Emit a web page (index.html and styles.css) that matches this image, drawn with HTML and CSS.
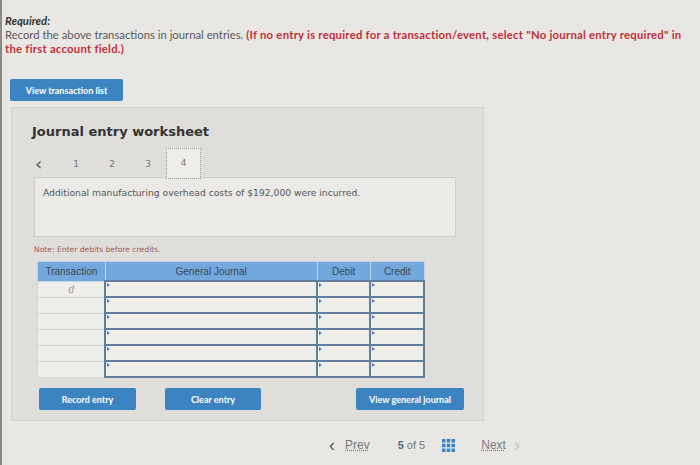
FILE: index.html
```html
<!DOCTYPE html>
<html lang="en">
<head>
    <meta charset="UTF-8">
    <meta name="viewport" content="width=device-width, initial-scale=1.0">
    <title>Journal entry worksheet</title>
    <link rel="stylesheet" href="styles.css">
</head>
<body>
    <!-- Enunciado -->
    <div class="instructions">
        <p class="required">Required:</p>
        <p>Record the above transactions in journal entries. <span class="hint">(If no entry is required for a transaction/event, select "No journal entry required" in the first account field.)</span></p>
    </div>

    <button class="btn btn-list">View transaction list</button>

    <!-- Hoja de trabajo -->
    <div class="worksheet">
        <h2>Journal entry worksheet</h2>

        <div class="tabs">
            <span class="tab-prev">&#8249;</span>
            <span class="tab">1</span>
            <span class="tab">2</span>
            <span class="tab">3</span>
            <span class="tab active">4</span>
        </div>

        <div class="desc-box">
            Additional manufacturing overhead costs of $192,000 were incurred.
        </div>

        <p class="note">Note: Enter debits before credits.</p>

        <table class="journal">
            <thead>
                <tr>
                    <th class="col-trans">Transaction</th>
                    <th class="col-gj">General Journal</th>
                    <th class="col-num">Debit</th>
                    <th class="col-num">Credit</th>
                </tr>
            </thead>
            <tbody>
                <tr><td class="trans">d</td><td class="field"></td><td class="field"></td><td class="field"></td></tr>
                <tr><td class="trans"></td><td class="field"></td><td class="field"></td><td class="field"></td></tr>
                <tr><td class="trans"></td><td class="field"></td><td class="field"></td><td class="field"></td></tr>
                <tr><td class="trans"></td><td class="field"></td><td class="field"></td><td class="field"></td></tr>
                <tr><td class="trans"></td><td class="field"></td><td class="field"></td><td class="field"></td></tr>
                <tr><td class="trans"></td><td class="field"></td><td class="field"></td><td class="field"></td></tr>
            </tbody>
        </table>

        <div class="actions">
            <button class="btn btn-record">Record entry</button>
            <button class="btn btn-clear">Clear entry</button>
            <button class="btn btn-view">View general journal</button>
        </div>
    </div>

    <!-- Paginación -->
    <div class="pager">
        <span class="pager-arrow">&#8249;</span>
        <span class="pager-link">Prev</span>
        <span class="pager-count"><b>5</b> of 5</span>
        <svg class="pager-grid" width="13" height="13" viewBox="0 0 13 13">
            <rect x="0" y="0" width="3.5" height="3.5"/><rect x="4.75" y="0" width="3.5" height="3.5"/><rect x="9.5" y="0" width="3.5" height="3.5"/>
            <rect x="0" y="4.75" width="3.5" height="3.5"/><rect x="4.75" y="4.75" width="3.5" height="3.5"/><rect x="9.5" y="4.75" width="3.5" height="3.5"/>
            <rect x="0" y="9.5" width="3.5" height="3.5"/><rect x="4.75" y="9.5" width="3.5" height="3.5"/><rect x="9.5" y="9.5" width="3.5" height="3.5"/>
        </svg>
        <span class="pager-link next">Next</span>
        <span class="pager-arrow light">&#8250;</span>
    </div>
</body>
</html>
```

FILE: styles.css
```css
/* Estilos generales */
body {
    margin: 0;
    height: 465px;
    box-sizing: border-box;
    background-color: #e8e7e3;
    border-left: 2px solid #8a8985;
    font-family: "Lato", "Liberation Sans", sans-serif;
    color: #5a5a5a;
    overflow: hidden;
}

/* Enunciado */
.instructions {
    padding: 14px 12px 0 3px;
    font-size: 11.3px;
    line-height: 14px;
}

.instructions p {
    margin: 0;
}

.instructions .required {
    font-style: italic;
    font-weight: bold;
    color: #333;
}

.instructions .hint {
    color: #c0303a;
    font-weight: bold;
    letter-spacing: 0.25px;
}

/* Botones */
.btn {
    display: block;
    background-color: #3b84c1;
    color: #fff;
    border: none;
    border-radius: 2px;
    font-family: "Lato", "Liberation Sans", sans-serif;
    font-size: 9px;
    font-weight: bold;
    height: 22px;
    padding: 0;
    cursor: pointer;
}

.btn-list {
    margin: 23px 0 0 8px;
    width: 113px;
}

/* Hoja de trabajo */
.worksheet {
    margin: 6px 0 0 9px;
    width: 473px;
    height: 314px;
    box-sizing: border-box;
    background-color: #dfdedb;
    border: 1px solid #d3d2ce;
    padding: 0 0 0 20px;
}

.worksheet h2 {
    margin: 16px 0 0;
    font-family: "DejaVu Sans", sans-serif;
    font-size: 13px;
    color: #333;
}

.tabs {
    display: flex;
    align-items: center;
    margin-top: 9px;
    height: 31px;
    font-family: "DejaVu Sans", sans-serif;
    font-size: 9px;
    color: #777;
}

.tab-prev {
    width: 23px;
    font-size: 18px;
    color: #555;
    padding-left: 3px;
}

.tab {
    width: 36px;
    text-align: center;
}

.tab.active {
    box-sizing: border-box;
    height: 31px;
    line-height: 29px;
    width: 35px;
    border: 1px dotted #9a9a9a;
    background-color: #eeede9;
}

.desc-box {
    margin: -2px 0 0 2px;
    width: 422px;
    height: 60px;
    box-sizing: border-box;
    background-color: #ebeae6;
    border: 1px solid #cfceca;
    padding: 9px 0 0 8px;
    font-family: "DejaVu Sans", sans-serif;
    font-size: 9.2px;
    color: #555;
}

.note {
    margin: 8px 0 0 2px;
    font-family: "DejaVu Sans", sans-serif;
    font-size: 7.6px;
    color: #a3585a;
}

/* Tabla del diario */
.journal {
    margin: 7px 0 0 5px;
    border-collapse: collapse;
    width: 388px;
    font-family: "Liberation Sans", sans-serif;
    font-size: 10px;
}

.journal th {
    height: 18px;
    background-color: #72a8db;
    color: #3c4754;
    font-weight: normal;
    border: 1px solid #c4d4e4;
    padding: 0;
}

.journal .col-trans {
    width: 67px;
}

.journal .col-gj {
    width: 214px;
}

.journal .col-num {
    width: 53px;
}

.journal td {
    height: 14px;
    padding: 0;
    background-color: #efeeea;
}

.journal td.trans {
    border: 1px solid #d3d2ce;
    text-align: center;
    color: #9a9a9a;
    font-style: italic;
}

.journal td.field {
    position: relative;
    border: 2px solid #617e9c;
}

/* Marca pequeña en la esquina de cada campo */
.journal td.field::before {
    content: "";
    position: absolute;
    top: 1px;
    left: 1px;
    border-top: 2px solid transparent;
    border-bottom: 2px solid transparent;
    border-left: 3px solid #4f7fae;
}

/* Botones de acción */
.actions {
    display: flex;
    margin-top: 10px;
    padding-left: 7px;
}

.btn-record {
    width: 97px;
}

.btn-clear {
    width: 96px;
    margin-left: 29px;
}

.btn-view {
    width: 108px;
    margin-left: 95px;
}

/* Paginación */
.pager {
    display: flex;
    align-items: center;
    margin: 17px 0 0 327px;
    font-family: "Liberation Sans", sans-serif;
    font-size: 12px;
    color: #777;
}

.pager-arrow {
    font-size: 18px;
    color: #555;
    margin-right: 10px;
    line-height: 12px;
}

.pager-arrow.light {
    color: #c4c4c4;
    margin-left: 8px;
}

.pager-link {
    text-decoration: underline dotted;
    color: #7a7a7a;
}

.pager-count {
    margin-left: 28px;
    font-size: 11px;
}

.pager-count b {
    color: #4a6b8a;
}

.pager-grid {
    fill: #3b84c1;
    margin-left: 17px;
}

.pager-link.next {
    margin-left: 26px;
}
```
